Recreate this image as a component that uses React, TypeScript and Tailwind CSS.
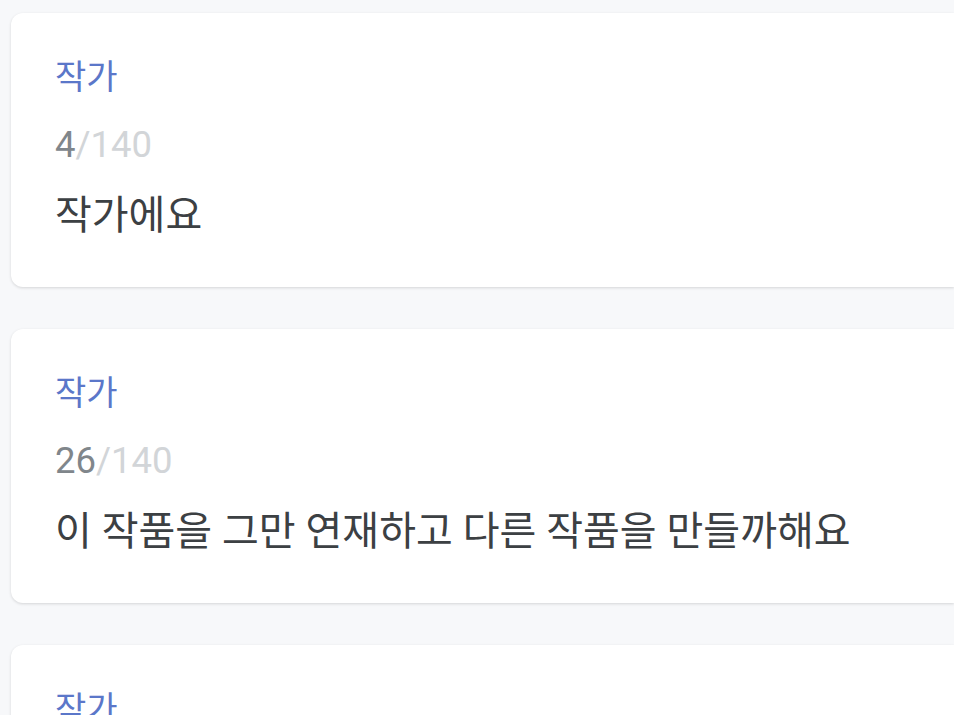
const comments = [
  { author: "작가", text: "작가에요" },
  { author: "작가", text: "이 작품을 그만 연재하고 다른 작품을 만들까해요" },
  { author: "작가", text: "다음 작품도 기대해주세요" },
];

function CommentCard({ author, text }: { author: string; text: string }) {
  const count = text.length;
  return (
    <div className="h-[274px] rounded-l-[12px] bg-white pl-[44px] pt-[44px] shadow-[0_1px_3px_rgba(0,0,0,0.14)]">
      <div className="text-[34px] leading-[40px] text-[#5b77c9]">{author}</div>
      <div className="mt-[26px] text-[36.5px] leading-[44px]">
        <span className="text-[#80868b]">{count}</span>
        <span className="text-[#d2d5d8]">/140</span>
      </div>
      <div className="mt-[25px] whitespace-nowrap text-[40px] leading-[48px] text-[#3c4043]">
        {text}
      </div>
    </div>
  );
}

export default function App() {
  return (
    <div
      className="h-[715px] overflow-hidden bg-[#f7f8fa] pl-[11px] pt-[13px]"
      style={{ fontFamily: "Roboto, 'Noto Sans CJK KR', sans-serif" }}
    >
      <div className="flex flex-col gap-[42px]">
        {comments.map((c, i) => (
          <CommentCard key={i} author={c.author} text={c.text} />
        ))}
      </div>
    </div>
  );
}
